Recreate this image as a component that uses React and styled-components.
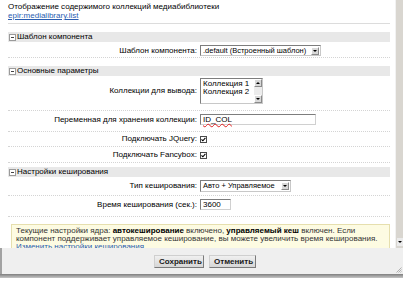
import React from 'react';
import styled, { createGlobalStyle } from 'styled-components';

const GlobalStyle = createGlobalStyle`
    html, body {
        margin: 0;
        padding: 0;
        background: #fff;
    }
    body {
        font-family: 'Liberation Sans', Arial, sans-serif;
        font-size: 8px;
        color: #000;
    }
`;

const Window = styled.div`
    width: 403px;
    height: 294px;
    display: flex;
    flex-direction: column;
    overflow: hidden;
    background: #fff;
`;

const Body = styled.div`
    display: flex;
    height: 248px;
    flex-shrink: 0;
    overflow: hidden;
`;

const Content = styled.div`
    flex: 1;
    padding: 2px 5px 0 8px;
    overflow: hidden;
`;

const Title = styled.div`
    line-height: 9px;
    white-space: nowrap;
`;

const Link = styled.a`
    display: block;
    line-height: 9px;
    color: #2a5db0;
    text-decoration: underline;
`;

const Rule = styled.div`
    margin-top: 3px;
    border-top: 1px solid #dcdcdc;
`;

const Section = styled.div`
    margin-top: ${p => p.$gap}px;
`;

const SectionHeader = styled.div`
    height: 10px;
    display: flex;
    align-items: center;
    gap: 1px;
    padding-left: 1px;
    background: #e8e8e8;
    line-height: 10px;
`;

const MinusBox = styled.span`
    width: 5px;
    height: 5px;
    border: 1px solid #9a9a9a;
    background: #fff;
    position: relative;
    &::after {
        content: '';
        position: absolute;
        left: 1px;
        right: 1px;
        top: 2px;
        height: 1px;
        background: #444;
    }
`;

const Row = styled.div`
    display: grid;
    grid-template-columns: 191px 1fr;
    align-items: center;
    padding: ${p => p.$pad};
    border-bottom: 1px dotted #d4d4d4;
`;

const Label = styled.div`
    text-align: right;
    padding-right: 2px;
    line-height: 8px;
    white-space: nowrap;
`;

const Value = styled.div`
    display: flex;
    align-items: center;
    padding-left: 1px;
    line-height: 8px;
`;

const Select = styled.div`
    width: ${p => p.$w}px;
    height: ${p => p.$h}px;
    box-sizing: border-box;
    display: flex;
    align-items: center;
    border: 1px solid #7d7d7d;
    border-right-color: #c8c8c8;
    border-bottom-color: #c8c8c8;
    background: #fff;
    padding-left: 2px;
    font-size: 7.5px;
    white-space: nowrap;
    overflow: hidden;
`;

const SelectText = styled.span`
    flex: 1;
`;

const ArrowButton = styled.span`
    width: 8px;
    height: 8px;
    margin-right: 1px;
    box-sizing: border-box;
    border: 1px solid #8a8a8a;
    border-top-color: #fff;
    border-left-color: #fff;
    background: #d8d8d8;
    display: flex;
    align-items: center;
    justify-content: center;
`;

const Arrow = styled.span`
    width: 0;
    height: 0;
    border-left: 2px solid transparent;
    border-right: 2px solid transparent;
    border-${p => (p.$up ? 'bottom' : 'top')}: 2px solid #000;
`;

const ListBox = styled.div`
    width: 63px;
    height: 26px;
    box-sizing: border-box;
    display: flex;
    border: 1px solid #7d7d7d;
    border-right-color: #c8c8c8;
    border-bottom-color: #c8c8c8;
    background: #fff;
`;

const ListItems = styled.div`
    flex: 1;
    padding: 1px 0 0 2px;
    line-height: 8px;
    white-space: nowrap;
    overflow: hidden;
`;

const ListScroll = styled.div`
    width: 8px;
    display: flex;
    flex-direction: column;
    justify-content: space-between;
    background: #ececec;
`;

const TextInput = styled.div`
    width: ${p => p.$w}px;
    height: 11px;
    box-sizing: border-box;
    border: 1px solid #7d7d7d;
    border-right-color: #d0d0d0;
    border-bottom-color: #d0d0d0;
    background: #fff;
    padding-left: 2px;
    line-height: 9px;
    white-space: nowrap;
`;

const Misspelled = styled.span`
    text-decoration: underline wavy #e02020;
    text-decoration-thickness: 1px;
    text-underline-offset: 1px;
`;

const CheckBox = () => (
    <svg width="7" height="7" viewBox="0 0 7 7">
        <rect x="0.5" y="0.5" width="6" height="6" fill="#fff" stroke="#4a4a4a" />
        <path d="M1.5 3.3 L2.9 4.8 L5.4 1.9" fill="none" stroke="#000" strokeWidth="1.1" />
    </svg>
);

const Note = styled.div`
    margin: 7px 0 0 3px;
    padding: 2px 4px;
    background: #fdfbe2;
    border: 1px solid #e6dfae;
    line-height: 8px;
    color: #333;
    white-space: nowrap;
    b {
        color: #000;
    }
`;

const NoteLink = styled.a`
    color: #2a5db0;
    text-decoration: underline;
`;

const Scrollbar = styled.div`
    width: 7px;
    border-left: 1px solid #f2f2f2;
    background: #d9d6d0;
    display: flex;
    flex-direction: column;
    justify-content: flex-end;
    align-items: center;
    padding-bottom: 2px;
`;

const ScrollButton = styled.span`
    width: 6px;
    height: 8px;
    background: #ebebeb;
    display: flex;
    align-items: center;
    justify-content: center;
`;

const Footer = styled.div`
    height: 26px;
    flex-shrink: 0;
    display: flex;
    align-items: center;
    justify-content: center;
    gap: 5px;
    padding-left: 5px;
    background: #efefef;
    border-left: 2px solid #a2a2a2;
    position: relative;
`;

const Button = styled.button`
    height: 13px;
    padding: 0 4px;
    font-family: 'Liberation Sans', Arial, sans-serif;
    font-size: 8px;
    font-weight: bold;
    line-height: 9px;
    color: #1a1a1a;
    background: linear-gradient(#f0f0f0, #d6d6d6);
    border: 1px solid #7a7a7a;
    border-top-color: #cfcfcf;
    border-left-color: #cfcfcf;
    width: ${p => p.$w}px;
`;

const Grip = styled.svg`
    position: absolute;
    right: 1px;
    bottom: 1px;
`;

const Shadow = styled.div`
    height: 4px;
    flex-shrink: 0;
    background: linear-gradient(#7e7e7e, #c6c6c6);
`;

const App = () => {
    return (
        <Window>
            <GlobalStyle />
            <Body>
                <Content>
                    <Title>Отображение содержимого коллекций медиабиблиотеки</Title>
                    <Link>epir:medialibrary.list</Link>
                    <Rule />

                    <Section $gap={8}>
                        <SectionHeader><MinusBox />Шаблон компонента</SectionHeader>
                        <Row $pad="3px 0 1px">
                            <Label>Шаблон компонента:</Label>
                            <Value>
                                <Select $w={121} $h={11}>
                                    <SelectText>.default (Встроенный шаблон)</SelectText>
                                    <ArrowButton><Arrow /></ArrowButton>
                                </Select>
                            </Value>
                        </Row>
                    </Section>

                    <Section $gap={8}>
                        <SectionHeader><MinusBox />Основные параметры</SectionHeader>
                        <Row $pad="2px 0 6px">
                            <Label>Коллекции для вывода:</Label>
                            <Value>
                                <ListBox>
                                    <ListItems>Коллекция 1<br />Коллекция 2</ListItems>
                                    <ListScroll>
                                        <ArrowButton><Arrow $up /></ArrowButton>
                                        <ArrowButton><Arrow /></ArrowButton>
                                    </ListScroll>
                                </ListBox>
                            </Value>
                        </Row>
                        <Row $pad="3px 0 6px">
                            <Label>Переменная для хранения коллекции:</Label>
                            <Value>
                                <TextInput $w={116}><Misspelled>ID_COL</Misspelled></TextInput>
                            </Value>
                        </Row>
                        <Row $pad="3px 0 3px">
                            <Label>Подключать JQuery:</Label>
                            <Value><CheckBox /></Value>
                        </Row>
                        <Row $pad="4px 0 3px">
                            <Label>Подключать Fancybox:</Label>
                            <Value><CheckBox /></Value>
                        </Row>
                    </Section>

                    <Section $gap={4}>
                        <SectionHeader><MinusBox />Настройки кеширования</SectionHeader>
                        <Row $pad="3px 0 3px">
                            <Label>Тип кеширования:</Label>
                            <Value>
                                <Select $w={91} $h={12}>
                                    <SelectText>Авто + Управляемое</SelectText>
                                    <ArrowButton><Arrow /></ArrowButton>
                                </Select>
                            </Value>
                        </Row>
                        <Row $pad="3px 0 6px">
                            <Label>Время кеширования (сек.):</Label>
                            <Value>
                                <TextInput $w={31}>3600</TextInput>
                            </Value>
                        </Row>
                    </Section>

                    <Note>
                        Текущие настройки ядра: <b>автокеширование</b> включено, <b>управляемый кеш</b> включен. Если<br />
                        компонент поддерживает управляемое кеширование, вы можете увеличить время кеширования.<br />
                        <NoteLink>Изменить настройки кеширования</NoteLink>
                    </Note>
                </Content>
                <Scrollbar>
                    <ScrollButton><Arrow /></ScrollButton>
                </Scrollbar>
            </Body>
            <Footer>
                <Button $w={50}>Сохранить</Button>
                <Button $w={47}>Отменить</Button>
                <Grip width="6" height="6" viewBox="0 0 6 6">
                    <path d="M5.5 0.5 L0.5 5.5 M5.5 2.5 L2.5 5.5 M5.5 4.5 L4.5 5.5" stroke="#b0b0b0" strokeWidth="1" />
                </Grip>
            </Footer>
            <Shadow />
        </Window>
    );
};

export default App;
